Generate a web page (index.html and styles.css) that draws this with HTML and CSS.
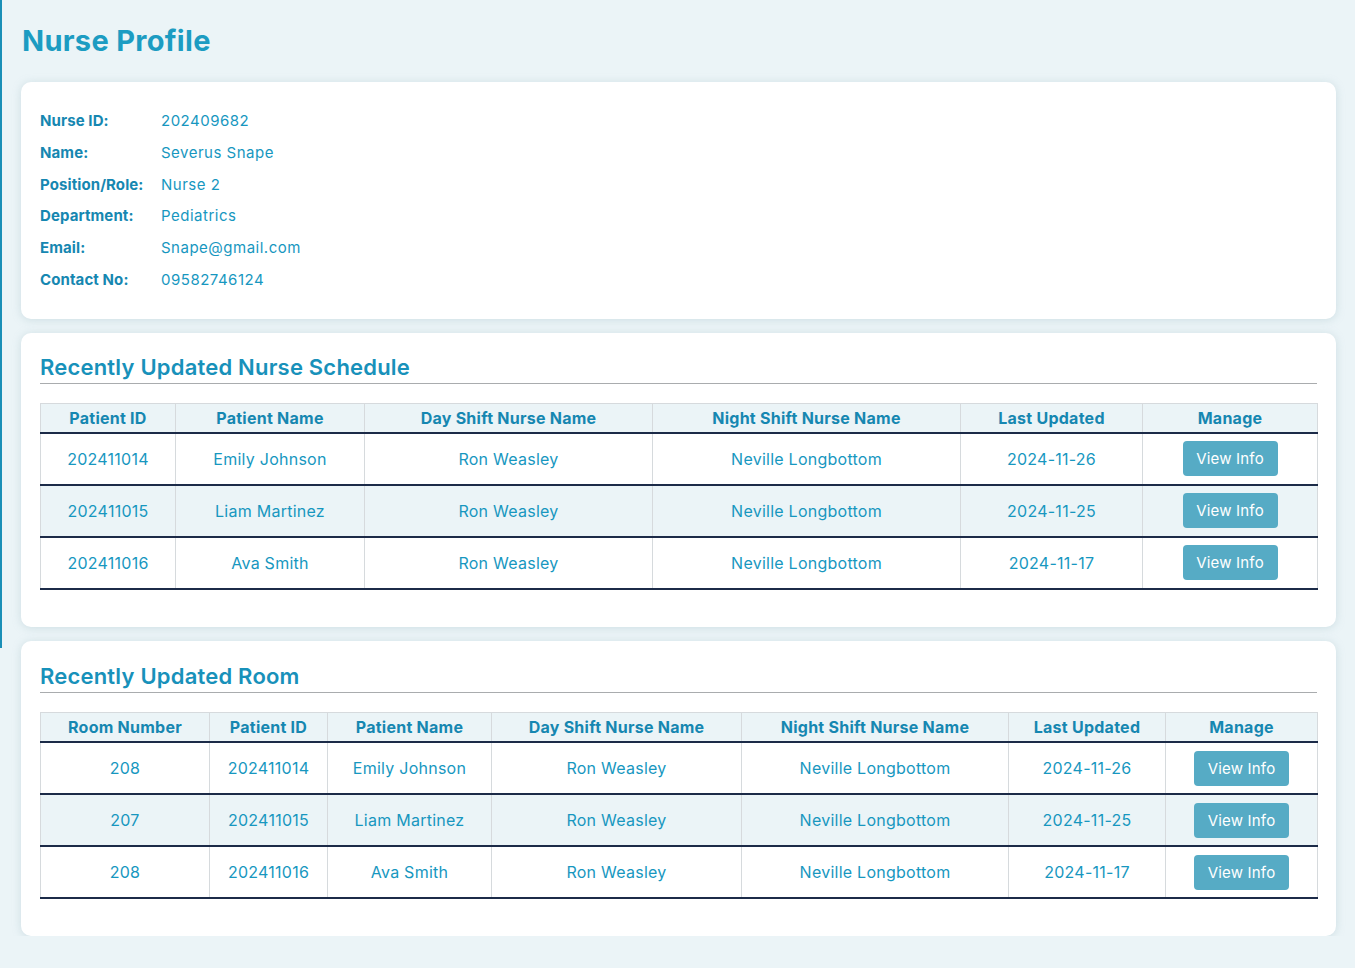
FILE: index.html
```html
<!DOCTYPE html>
<html>
<head>
<meta charset="utf-8">
<link rel="stylesheet" href="styles.css">
</head>
<body>
<div class="edge"></div>
<main class="page">
  <h1 class="title">Nurse Profile</h1>

  <section class="card profile">
    <dl class="info">
      <dt>Nurse ID:</dt><dd>202409682</dd>
      <dt>Name:</dt><dd>Severus Snape</dd>
      <dt>Position/Role:</dt><dd>Nurse 2</dd>
      <dt>Department:</dt><dd>Pediatrics</dd>
      <dt>Email:</dt><dd>Snape@gmail.com</dd>
      <dt>Contact No:</dt><dd>09582746124</dd>
    </dl>
  </section>

  <section class="card">
    <h2 class="section-title">Recently Updated Nurse Schedule</h2>
    <table class="grid">
      <colgroup>
        <col class="s1"><col class="s2"><col class="s3"><col class="s4"><col class="s5"><col class="s6">
      </colgroup>
      <thead>
        <tr><th>Patient ID</th><th>Patient Name</th><th>Day Shift Nurse Name</th><th>Night Shift Nurse Name</th><th>Last Updated</th><th>Manage</th></tr>
      </thead>
      <tbody>
        <tr><td>202411014</td><td>Emily Johnson</td><td>Ron Weasley</td><td>Neville Longbottom</td><td>2024-11-26</td><td><button class="btn">View Info</button></td></tr>
        <tr class="alt"><td>202411015</td><td>Liam Martinez</td><td>Ron Weasley</td><td>Neville Longbottom</td><td>2024-11-25</td><td><button class="btn">View Info</button></td></tr>
        <tr><td>202411016</td><td>Ava Smith</td><td>Ron Weasley</td><td>Neville Longbottom</td><td>2024-11-17</td><td><button class="btn">View Info</button></td></tr>
      </tbody>
    </table>
  </section>

  <section class="card room">
    <h2 class="section-title">Recently Updated Room</h2>
    <table class="grid">
      <colgroup>
        <col class="r1"><col class="r2"><col class="r3"><col class="r4"><col class="r5"><col class="r6"><col class="r7">
      </colgroup>
      <thead>
        <tr><th>Room Number</th><th>Patient ID</th><th>Patient Name</th><th>Day Shift Nurse Name</th><th>Night Shift Nurse Name</th><th>Last Updated</th><th>Manage</th></tr>
      </thead>
      <tbody>
        <tr><td>208</td><td>202411014</td><td>Emily Johnson</td><td>Ron Weasley</td><td>Neville Longbottom</td><td>2024-11-26</td><td><button class="btn">View Info</button></td></tr>
        <tr class="alt"><td>207</td><td>202411015</td><td>Liam Martinez</td><td>Ron Weasley</td><td>Neville Longbottom</td><td>2024-11-25</td><td><button class="btn">View Info</button></td></tr>
        <tr><td>208</td><td>202411016</td><td>Ava Smith</td><td>Ron Weasley</td><td>Neville Longbottom</td><td>2024-11-17</td><td><button class="btn">View Info</button></td></tr>
      </tbody>
    </table>
  </section>
</main>
</body>
</html>
```

FILE: styles.css
```css
* { box-sizing: border-box; }

html, body {
  margin: 0;
  padding: 0;
  background: #ebf4f7;
  font-family: Inter, "Open Sans", sans-serif;
  color: #1595bd;
}

.edge {
  position: absolute;
  left: 0;
  top: 0;
  width: 2px;
  height: 648px;
  background: #1a8fb7;
}

.page {
  padding: 0 19px 0 21px;
  display: flex;
  flex-direction: column;
  gap: 14px;
}

.title {
  margin: 21px 0 7px 1px;
  font-size: 29px;
  line-height: 40px;
  font-weight: 700;
  color: #1c9cc2;
  letter-spacing: 0.3px;
}

.card {
  background: #fff;
  border-radius: 10px;
  box-shadow: 0 1px 8px rgba(150, 180, 190, 0.35);
  padding: 20px 19px 37px 19px;
}

.profile {
  padding: 23px 19px 24px 19px;
}

.room {
  padding-top: 21px;
}

.info {
  margin: 0;
  display: grid;
  grid-template-columns: 121px auto;
  grid-auto-rows: 31.7px;
  align-items: center;
  font-size: 15px;
}

.info dt {
  font-weight: 700;
  color: #1687b1;
  letter-spacing: 0.1px;
}

.info dd {
  margin: 0;
  color: #1797bf;
  letter-spacing: 0.5px;
}

.section-title {
  margin: 0;
  font-size: 22px;
  line-height: 28px;
  font-weight: 600;
  color: #1891ba;
  padding-bottom: 2px;
  border-bottom: 1px solid #a9acae;
  letter-spacing: 0.2px;
}

.grid {
  margin-top: 19px;
  width: 100%;
  border-collapse: collapse;
  table-layout: fixed;
  font-size: 16px;
  text-align: center;
  letter-spacing: 0.25px;
}

.grid th {
  background: #ebf4f7;
  height: 29px;
  font-weight: 700;
  color: #1687b1;
  border: 1px solid #d6dadd;
  border-bottom: 2px solid #1c2b48;
}

.room .grid th {
  height: 30px;
}

.grid td {
  height: 52px;
  border-left: 1px solid #d6dadd;
  border-right: 1px solid #d6dadd;
  border-bottom: 2px solid #1c2b48;
  color: #1797bf;
}

.grid tr.alt td { background: #ebf4f7; }

.btn {
  background: #56abc5;
  color: #fff;
  border: none;
  border-radius: 4px;
  font-family: inherit;
  font-size: 15px;
  letter-spacing: 0.2px;
  width: 95px;
  height: 35px;
  padding: 0;
}

.s1 { width: 135px; }
.s2 { width: 189px; }
.s3 { width: 288px; }
.s4 { width: 308px; }
.s5 { width: 182px; }
.s6 { width: 175px; }

.r1 { width: 169px; }
.r2 { width: 118px; }
.r3 { width: 164px; }
.r4 { width: 250px; }
.r5 { width: 267px; }
.r6 { width: 157px; }
.r7 { width: 152px; }
```
